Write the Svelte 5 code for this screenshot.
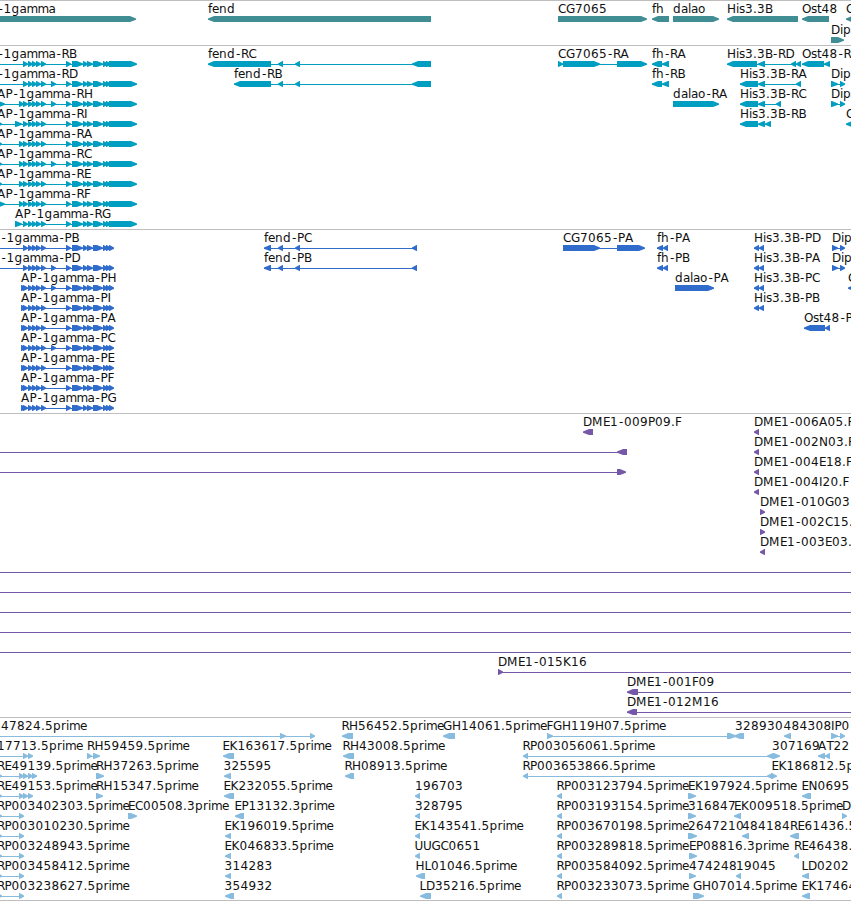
<script lang="ts">
	type Span = [number, number];
	type Dir = 'right' | 'left';
	type Feature = { row: number; name: string; x: number; dir: Dir; spans: Span[]; from?: number; to?: number };
	type Track = { id: string; color: string; pitch: number; height: number; features: Feature[] };

	const WIDTH = 851;
	const TIP = 6;

	// label advances in pixels, per character
	const ADVANCE: Record<string, number> = {
		A: 8.5, B: 7, C: 8, D: 9, E: 7, F: 6.5, G: 9, H: 9, I: 3.5, K: 8, L: 6.5, M: 11, N: 9,
		O: 9, P: 7, R: 7.5, T: 7, U: 8.5, a: 7, d: 8, e: 7, f: 4, g: 8, h: 8, i: 3, l: 3,
		m: 11, n: 8, o: 7.5, p: 8, r: 5, s: 6, t: 4.5, '.': 4, '-': 6
	};

	function glyphs(name: string, x: number) {
		const out: number[] = [];
		let at = x;
		for (const ch of name) {
			out.push(ch === '-' ? at + 1 : at);
			at += ADVANCE[ch] ?? 8;
		}
		return out.join(' ');
	}

	function f(row: number, name: string, x: number, dir: Dir, spans: Span[], from?: number, to?: number): Feature {
		return { row, name, x, dir, spans, from, to };
	}

	function shape([a, b]: Span, dir: Dir, y: number) {
		const tip = Math.min(TIP, b - a - 0.5);
		if (dir === 'right') {
			return `${a},${y} ${b - tip},${y} ${b},${y + 2.4} ${b},${y + 3.8} ${b - tip},${y + 6} ${a},${y + 6}`;
		}
		return `${b},${y} ${a + tip},${y} ${a},${y + 2.4} ${a},${y + 3.8} ${a + tip},${y + 6} ${b},${y + 6}`;
	}

	const lineStart = (item: Feature) => item.from ?? Math.min(...item.spans.map((s) => s[0]));
	const lineEnd = (item: Feature) => item.to ?? Math.max(...item.spans.map((s) => s[1])) - 2;

	const head: Span[] = [[23, 28], [28, 33], [32, 37], [36, 41], [41, 46]];
	const middle: Span[] = [[66, 71], [72, 83], [83, 88], [87, 93], [93, 103]];
	const extra: Span = [51, 56];
	const utr: Span[] = [...head, ...middle, [103, 108], [106, 111], [109, 137]];
	const cds: Span[] = [...head, ...middle, [103, 108], [106, 111], [109, 114]];
	const fendTail: Span[] = [[278, 283], [295, 300]];

	const genes: Feature[] = [
		f(0, '-1gamma', -2.5, 'right', [[-20, 136]]),
		f(0, 'fend', 208, 'left', [[208, 431]]),
		f(0, 'CG7065', 558, 'right', [[558, 647]]),
		f(0, 'fh', 652, 'left', [[652, 669]]),
		f(0, 'dalao', 673, 'right', [[673, 719]]),
		f(0, 'His3.3B', 727, 'left', [[727, 798]]),
		f(0, 'Ost48', 802, 'left', [[802, 829]]),
		f(0, 'C', 846, 'left', [[846, 870]]),
		f(1, 'Dip', 831, 'right', [[831, 844]])
	];

	const transcripts: Feature[] = [
		f(0, '-1gamma-RB', -2.5, 'right', utr, -20),
		f(1, '-1gamma-RD', -2.5, 'right', [...utr, extra], -20),
		f(2, 'AP-1gamma-RH', -3, 'right', [[-3, 5], [19, 24], ...utr, extra]),
		f(3, 'AP-1gamma-RI', -3, 'right', [[-3, 2], [15, 22], ...utr]),
		f(4, 'AP-1gamma-RA', -3, 'right', [[-3, 2], [19, 24], ...utr]),
		f(5, 'AP-1gamma-RC', -3, 'right', [[-3, 2], [19, 24], ...utr, extra]),
		f(6, 'AP-1gamma-RE', -3, 'right', [[-3, 2], [19, 24], ...utr]),
		f(7, 'AP-1gamma-RF', -3, 'right', [[-3, 5], [19, 24], ...utr]),
		f(8, 'AP-1gamma-RG', 15, 'right', [[15, 22], ...utr]),
		f(0, 'fend-RC', 208, 'left', [[208, 271], ...fendTail, [412, 431]]),
		f(1, 'fend-RB', 234, 'left', [[234, 271], ...fendTail, [412, 431]]),
		f(0, 'CG7065-RA', 558, 'right', [[558, 563], [563, 600], [617, 647]]),
		f(0, 'fh-RA', 652, 'left', [[652, 662], [662, 669]]),
		f(1, 'fh-RB', 652, 'left', [[652, 662], [662, 669]]),
		f(2, 'dalao-RA', 673, 'right', [[673, 719]]),
		f(0, 'His3.3B-RD', 727, 'left', [[727, 757], [758, 765], [791, 796], [796, 801]]),
		f(1, 'His3.3B-RA', 740, 'left', [[740, 758], [758, 765], [796, 801]]),
		f(2, 'His3.3B-RC', 740, 'left', [[740, 758], [758, 765], [776, 781]]),
		f(3, 'His3.3B-RB', 740, 'left', [[740, 758], [758, 765], [765, 771]]),
		f(0, 'Ost48-R', 802, 'left', [[802, 824], [824, 830]]),
		f(1, 'Dip', 831, 'right', [[831, 838], [840, 845]]),
		f(2, 'Dip', 831, 'right', [[831, 838], [840, 845]]),
		f(3, 'C', 846, 'left', [[846, 870]])
	];

	const proteins: Feature[] = [
		f(0, '-1gamma-PB', 0.5, 'right', cds, -20),
		f(1, '-1gamma-PD', 0.5, 'right', [...cds, extra], -20),
		...['PH', 'PI', 'PA', 'PC', 'PE', 'PF', 'PG'].map((id, i) =>
			f(i + 2, 'AP-1gamma-' + id, 21, 'right', [[21, 27], ...cds, ...(id === 'PH' || id === 'PC' ? [extra] : [])])
		),
		f(0, 'fend-PC', 264, 'left', [[264, 271], ...fendTail, [412, 417]]),
		f(1, 'fend-PB', 264, 'left', [[264, 271], ...fendTail, [412, 417]]),
		f(0, 'CG7065-PA', 563, 'right', [[563, 600], [617, 645]]),
		f(0, 'fh-PA', 657, 'left', [[657, 663], [663, 668]]),
		f(1, 'fh-PB', 657, 'left', [[657, 663], [663, 668]]),
		f(2, 'dalao-PA', 675, 'right', [[675, 714]]),
		...['PD', 'PA', 'PC', 'PB'].map((id, i) =>
			f(i, 'His3.3B-' + id, 754, 'left', [[754, 759], [759, 764]])
		),
		f(4, 'Ost48-P', 804, 'left', [[804, 825], [825, 830]]),
		f(0, 'Dip', 832, 'right', [[832, 838], [840, 845]]),
		f(1, 'Dip', 832, 'right', [[832, 838], [840, 845]]),
		f(2, 'C', 848, 'left', [[848, 870]])
	];

	const clones: Feature[] = [
		f(0, 'DME1-009P09.F', 583, 'left', [[583, 593]]),
		f(1, '', 0, 'left', [[617, 627]], -20),
		f(2, '', 0, 'right', [[617, 626]], -20),
		...['006A05.F', '002N03.F', '004E18.F', '004I20.F'].map((id, i) =>
			f(i, 'DME1-' + id, 754, 'left', [[754, 759]])
		),
		f(4, 'DME1-010G03', 760, 'right', [[760, 765]]),
		f(5, 'DME1-002C15.', 760, 'right', [[760, 765]]),
		f(6, 'DME1-003E03.', 760, 'left', [[760, 765]]),
		...[7, 8, 9, 10, 11].map((row) => f(row, '', 0, 'right', [], 0, WIDTH)),
		f(12, 'DME1-015K16', 498, 'right', [[498, 503]], 498, WIDTH),
		f(13, 'DME1-001F09', 627, 'left', [[627, 638]], 627, WIDTH),
		f(14, 'DME1-012M16', 627, 'left', [[627, 637]], 627, WIDTH)
	];

	const ests: Feature[] = [
		f(0, '47824.5prime', 1, 'right', [[280, 286], [310, 315]], -20),
		f(1, '17713.5prime', -3, 'right', [[23, 28], [28, 33]], -20),
		f(2, 'RE49139.5prime', -3, 'right', [[-3, 2], [19, 24], [23, 28], [28, 33], [32, 37]]),
		f(3, 'RE49153.5prime', -3, 'right', [[-3, 2], [19, 24], [23, 28], [28, 33]]),
		...['3402303', '3010230', '3248943', '3458412', '3238627'].map((id, i) =>
			f(i + 4, `RP00${id}.5prime`, -3, 'right', [[-3, 2], [19, 24]])
		),
		f(1, 'RH59459.5prime', 87, 'right', [[87, 92], [93, 100]]),
		f(2, 'RH37263.5prime', 96, 'right', [[96, 104]]),
		f(3, 'RH15347.5prime', 96, 'right', [[96, 103]]),
		f(4, 'EC00508.3prime', 128, 'right', [[128, 137]]),
		f(1, 'EK163617.5prime', 222.5, 'left', [[223, 234]]),
		f(2, '325595', 223.5, 'left', [[224, 231]]),
		f(3, 'EK232055.5prime', 223.5, 'left', [[224, 234]]),
		f(4, 'EP13132.3prime', 234.5, 'left', [[235, 244]]),
		f(5, 'EK196019.5prime', 224.5, 'left', [[225, 231]]),
		f(6, 'EK046833.5prime', 224.5, 'left', [[225, 231]]),
		f(7, '314283', 224.5, 'left', [[225, 231]]),
		f(8, '354932', 224.5, 'left', [[225, 234]]),
		f(0, 'RH56452.5prime', 341.5, 'left', [[342, 353]]),
		f(1, 'RH43008.5prime', 342.5, 'left', [[343, 354]]),
		f(2, 'RH08913.5prime', 344.5, 'left', [[345, 354]]),
		f(0, 'GH14061.5prime', 443, 'left', [[443, 455]]),
		f(3, '196703', 415, 'left', [[415, 420]]),
		f(4, '328795', 415, 'left', [[415, 420]]),
		f(5, 'EK143541.5prime', 414.5, 'left', [[415, 420]]),
		f(6, 'UUGC0651', 414.5, 'left', [[415, 420]]),
		f(7, 'HL01046.5prime', 415.5, 'left', [[416, 425]]),
		f(8, 'LD35216.5prime', 419.5, 'left', [[420, 431]]),
		f(0, 'FGH119H07.5prime', 546.5, 'right', [[547, 553], [727, 736]]),
		f(1, 'RP003056061.5prime', 522.5, 'left', [[523, 528], [767, 774]]),
		f(2, 'RP003653866.5prime', 522.5, 'left', [[523, 528], [767, 773]]),
		f(1, '', 0, 'right', [[773, 780]]),
		f(2, '', 0, 'right', [[771, 777]]),
		...['3123794', '3193154', '3670198', '3289818', '3584092', '3233073'].map((id, i) =>
			f(i + 3, `RP00${id}.5prime`, 556.5, 'left', [[557, 562]])
		),
		f(0, '328930', 735, 'left', [[734, 744]]),
		f(0, '484308', 783.5, 'left', [[784, 791]]),
		f(0, 'IP0', 831, 'right', [[831, 838], [840, 845]]),
		f(1, '307169', 772, 'left', []),
		f(1, 'AT22', 818, 'left', [[818, 825], [825, 830]]),
		f(2, 'EK186812.5p', 771.5, 'left', []),
		f(3, 'EK197924.5prime', 688, 'right', [[688, 696]]),
		f(4, '316847', 688, 'right', [[688, 696]]),
		f(5, '2647210', 688, 'right', [[688, 697]]),
		f(6, 'EP08816.3prime', 689, 'right', [[689, 697]]),
		f(7, '474248', 689, 'right', [[689, 696]]),
		f(8, 'GH07014.5prime', 693, 'right', [[693, 704]]),
		f(4, 'EK009518.5prime', 734, 'left', [[734, 741]]),
		f(5, '484184', 742, 'left', [[742, 749]]),
		f(7, '19045', 736, 'left', [[736, 741]]),
		f(3, 'EN0695', 801.5, 'left', [[802, 811]]),
		f(4, 'D', 842, 'right', [[842, 847]]),
		f(5, 'RE61436.5', 790, 'left', [[790, 799]]),
		f(6, 'RE46438.', 794, 'left', [[794, 799]]),
		f(7, 'LD0202', 801.5, 'left', [[802, 809]]),
		f(8, 'EK17464', 801.5, 'left', [[802, 810]])
	];

	const tracks: Track[] = [
		{ id: 'genes', color: '#408e94', pitch: 21, height: 45, features: genes },
		{ id: 'transcripts', color: '#009fc1', pitch: 20, height: 184, features: transcripts },
		{ id: 'proteins', color: '#306ccc', pitch: 20, height: 184, features: proteins },
		{ id: 'clones', color: '#7558a8', pitch: 20, height: 304, features: clones },
		{ id: 'ests', color: '#88bcdf', pitch: 20, height: 183, features: ests }
	];
</script>

<main class="browser">
	{#each tracks as track (track.id)}
		<section class="track">
			<svg width={WIDTH} height={track.height - 1} viewBox="0 1 {WIDTH} {track.height - 1}" fill={track.color}>
				{#each track.features as item}
					{@const top = item.row * track.pitch}
					{#if item.spans.length > 1 || item.from !== undefined}
						<rect
							x={lineStart(item)}
							y={top + 19}
							width={lineEnd(item) - lineStart(item)}
							height="1"
						/>
					{/if}
					{#each item.spans as span}
						<polygon points={shape(span, item.dir, top + 16)} />
					{/each}
					{#if item.name}
						<text x={glyphs(item.name, item.x)} y={top + 13}>{item.name}</text>
					{/if}
				{/each}
			</svg>
		</section>
	{/each}
</main>

<style>
	:global(body) {
		margin: 0;
		background: #fff;
	}

	.browser {
		width: 851px;
		height: 900px;
		overflow: hidden;
		border-bottom: 1px solid #bebebe;
	}

	.track {
		border-top: 1px solid #bebebe;
	}

	.track svg {
		display: block;
	}

	text {
		font-family: 'DejaVu Sans', 'Noto Sans', sans-serif;
		font-size: 12px;
		fill: #111;
	}
</style>
